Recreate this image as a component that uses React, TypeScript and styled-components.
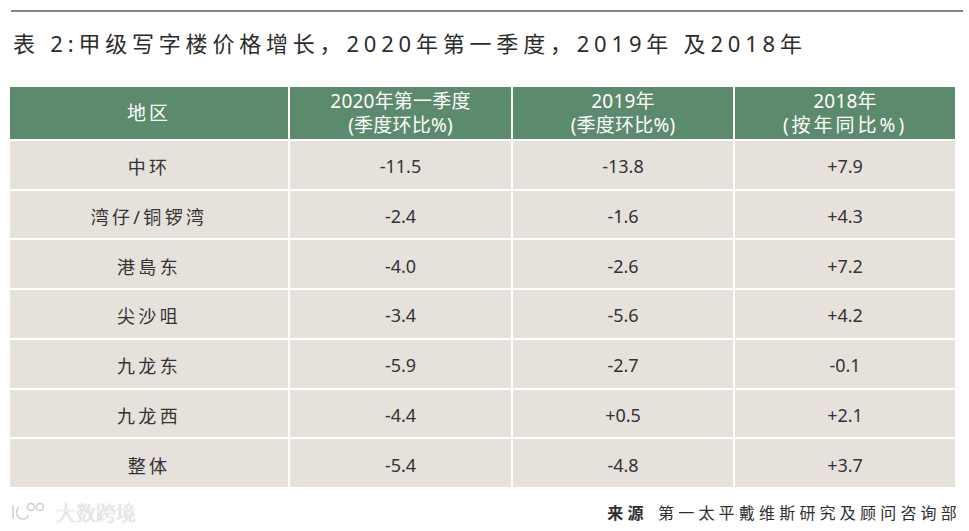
import React from "react";
import styled, { createGlobalStyle } from "styled-components";

const Global = createGlobalStyle`
  html, body { margin: 0; padding: 0; background: #ffffff; }
  body { font-family: "Noto Sans", "Noto Sans CJK SC", sans-serif; }
`;

const Page = styled.div`
  width: 969px;
  height: 531px;
  box-sizing: border-box;
  padding: 10px 6px 0 10px;
  display: flex;
  flex-direction: column;
  overflow: hidden;
`;

const Rule = styled.div`
  height: 2px;
  background: #858585;
  margin: 0 0 0 1px;
`;

const Title = styled.h1`
  margin: 17px 0 0 3px;
  font-family: "Noto Sans", "Noto Sans CJK SC", sans-serif;
  font-weight: 400;
  font-size: 22px;
  line-height: 28px;
  letter-spacing: 4.8px;
  color: #2b2b2b;
  white-space: nowrap;
`;

const Table = styled.div`
  margin-top: 30px;
  width: 945px;
  height: 400px;
  display: grid;
  grid-template-columns: 278px 221px 220px 220px;
  grid-template-rows: 52px repeat(7, 1fr);
  gap: 2px;
  background: #ffffff;
`;

const HeadCell = styled.div<{ $spaced?: boolean }>`
  background: #5c8a6c;
  color: #ffffff;
  display: flex;
  flex-direction: column;
  align-items: center;
  justify-content: center;
  font-size: 19px;
  line-height: 24px;
  letter-spacing: ${(p) => (p.$spaced ? "3px" : "0")};
`;

const HeadLine = styled.span<{ $spaced?: boolean }>`
  display: block;
  line-height: 24px;
  letter-spacing: ${(p) => (p.$spaced ? "3px" : "0.2px")};
`;

const Cell = styled.div<{ $label?: boolean }>`
  background: #e7e1dc;
  color: #333333;
  display: flex;
  align-items: center;
  justify-content: center;
  font-size: 18px;
  padding-top: 3px;
  letter-spacing: ${(p) => (p.$label ? "3.3px" : "0")};
`;

const Footer = styled.div`
  margin-top: 13px;
  height: 24px;
  display: flex;
  align-items: center;
  justify-content: space-between;
  padding-right: 2px;
`;

const Watermark = styled.div`
  display: flex;
  align-items: center;
  gap: 6px;
  color: #f4f4f4;
  font-size: 20px;
  font-weight: 300;
  text-shadow: 0 0 1px #b8b8b8, 0 0 1px #c8c8c8;
`;

const Source = styled.div`
  font-size: 16px;
  letter-spacing: 4.2px;
  color: #2e2e2e;
  white-space: nowrap;
`;

const SourceLabel = styled.b`
  font-weight: 700;
  margin-right: 2px;
`;

const rows: [string, string, string, string][] = [
  ["中环", "-11.5", "-13.8", "+7.9"],
  ["湾仔/铜锣湾", "-2.4", "-1.6", "+4.3"],
  ["港島东", "-4.0", "-2.6", "+7.2"],
  ["尖沙咀", "-3.4", "-5.6", "+4.2"],
  ["九龙东", "-5.9", "-2.7", "-0.1"],
  ["九龙西", "-4.4", "+0.5", "+2.1"],
  ["整体", "-5.4", "-4.8", "+3.7"],
];

export default function App() {
  return (
    <Page>
      <Global />
      <Rule />
      <Title>表 2:甲级写字楼价格增长，2020年第一季度，2019年 及2018年</Title>
      <Table>
        <HeadCell $spaced>地区</HeadCell>
        <HeadCell>
          <HeadLine>2020年第一季度</HeadLine>
          <HeadLine>(季度环比%)</HeadLine>
        </HeadCell>
        <HeadCell>
          <HeadLine>2019年</HeadLine>
          <HeadLine>(季度环比%)</HeadLine>
        </HeadCell>
        <HeadCell>
          <HeadLine>2018年</HeadLine>
          <HeadLine $spaced>(按年同比%)</HeadLine>
        </HeadCell>
        {rows.map((r) => (
          <React.Fragment key={r[0]}>
            <Cell $label>{r[0]}</Cell>
            <Cell>{r[1]}</Cell>
            <Cell>{r[2]}</Cell>
            <Cell>{r[3]}</Cell>
          </React.Fragment>
        ))}
      </Table>
      <Footer>
        <Watermark>
          <svg width="40" height="22" viewBox="0 0 40 22" fill="none" stroke="#d0d0d0" strokeWidth="1.6">
            <path d="M3 4 L3 18" />
            <path d="M9 6 C5 10 6 17 12 18 C16 18 18 16 18 14" />
            <circle cx="21" cy="6" r="3.5" />
            <circle cx="30" cy="6" r="3.5" />
          </svg>
          <span>大数跨境</span>
        </Watermark>
        <Source>
          <SourceLabel>来源</SourceLabel> 第一太平戴维斯研究及顾问咨询部
        </Source>
      </Footer>
    </Page>
  );
}
